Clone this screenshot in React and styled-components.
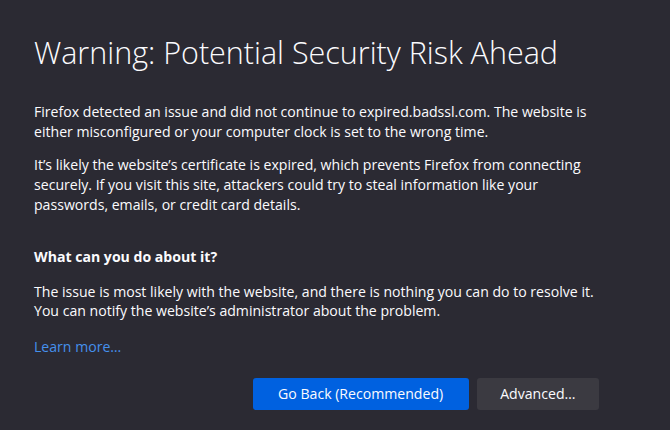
import styled, { createGlobalStyle } from "styled-components";

const Global = createGlobalStyle`
  html, body {
    margin: 0;
    padding: 0;
    background: #2b2a33;
  }
  body {
    font-family: "Open Sans", "Noto Sans", sans-serif;
    color: #fbfbfe;
  }
`;

const Page = styled.main`
  width: 670px;
  height: 430px;
  box-sizing: border-box;
  padding: 32px 0 0 34px;
  overflow: hidden;
`;

const Container = styled.div`
  width: 565px;
`;

const Title = styled.h1`
  margin: 0 0 30px;
  font-size: 30.5px;
  font-weight: 300;
  line-height: 40px;
`;

const Text = styled.p`
  margin: 0 0 14px;
  font-size: 14.1px;
  line-height: 19.7px;
`;

const Heading = styled.h2`
  margin: 32px 0 15px;
  font-size: 14.1px;
  font-weight: 700;
  line-height: 20px;
`;

const Link = styled.a`
  display: inline-block;
  margin-top: -2px;
  font-size: 14.1px;
  line-height: 20px;
  color: #4590ec;
  text-decoration: none;
`;

const Buttons = styled.div`
  display: flex;
  justify-content: flex-end;
  gap: 8px;
  margin-top: 21px;
`;

const Button = styled.button`
  height: 32px;
  padding: 0 ${(p) => (p.$primary ? "25.5px" : "23.5px")};
  border: none;
  border-radius: 3px;
  font-family: inherit;
  font-size: 14.1px;
  color: #fbfbfe;
  background: ${(p) => (p.$primary ? "#0061e0" : "#3b3a41")};
  cursor: pointer;
`;

export default function App() {
  return (
    <>
      <Global />
      <Page>
        <Container>
          <Title>Warning: Potential Security Risk Ahead</Title>
          <Text>
            Firefox detected an issue and did not continue to expired.badssl.com. The website is
            either misconfigured or your computer clock is set to the wrong time.
          </Text>
          <Text>
            It’s likely the website’s certificate is expired, which prevents Firefox from connecting
            securely. If you visit this site, attackers could try to steal information like your
            passwords, emails, or credit card details.
          </Text>
          <Heading>What can you do about it?</Heading>
          <Text>
            The issue is most likely with the website, and there is nothing you can do to resolve it.
            You can notify the website’s administrator about the problem.
          </Text>
          <Link href="#">Learn more…</Link>
          <Buttons>
            <Button $primary>Go Back (Recommended)</Button>
            <Button>Advanced…</Button>
          </Buttons>
        </Container>
      </Page>
    </>
  );
}
